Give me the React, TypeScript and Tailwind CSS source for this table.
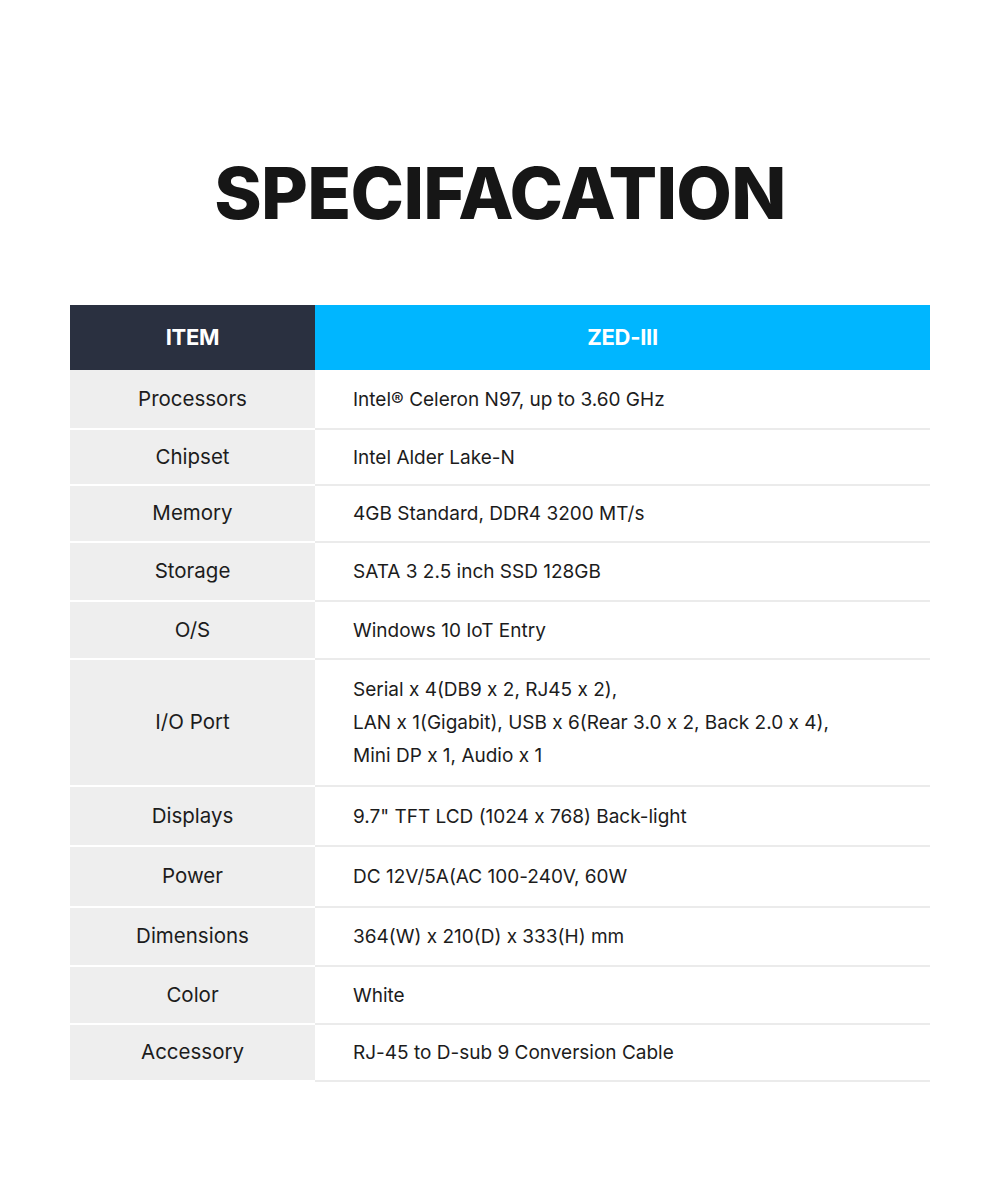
import React from "react";

const specs = [
  { item: "Processors", value: ["Intel® Celeron N97, up to 3.60 GHz"], h: "h-[58px]" },
  { item: "Chipset", value: ["Intel Alder Lake-N"], h: "h-[54px]" },
  { item: "Memory", value: ["4GB Standard, DDR4 3200 MT/s"], h: "h-[55px]" },
  { item: "Storage", value: ["SATA 3 2.5 inch SSD 128GB"], h: "h-[57px]" },
  { item: "O/S", value: ["Windows 10 IoT Entry"], h: "h-[56px]" },
  {
    item: "I/O Port",
    value: [
      "Serial x 4(DB9 x 2, RJ45 x 2),",
      "LAN x 1(Gigabit), USB x 6(Rear 3.0 x 2, Back 2.0 x 4),",
      "Mini DP x 1, Audio x 1",
    ],
    h: "h-[125px]",
  },
  { item: "Displays", value: ['9.7" TFT LCD (1024 x 768) Back-light'], h: "h-[58px]" },
  { item: "Power", value: ["DC 12V/5A(AC 100-240V, 60W"], h: "h-[59px]" },
  { item: "Dimensions", value: ["364(W) x 210(D) x 333(H) mm"], h: "h-[57px]" },
  { item: "Color", value: ["White"], h: "h-[56px]" },
  { item: "Accessory", value: ["RJ-45 to D-sub 9 Conversion Cable"], h: "h-[55px]" },
];

const App = () => {
  return (
    <div className="w-[1000px] h-[1200px] bg-white font-['Inter',sans-serif] [font-feature-settings:'calt'_0] text-[#1c1c1c]">
      <div className="pt-[148px] flex justify-center">
        <h1 className="text-[72px] leading-none font-extrabold tracking-[-0.7px] text-[#161616] h-[90px] flex items-center">
          SPECIFACATION
        </h1>
      </div>

      <div className="mx-[70px] mt-[67px]">
        <div className="flex h-[65px] text-white font-bold text-[22px] tracking-[-0.3px]">
          <div className="w-[245px] bg-[#2a3040] flex items-center justify-center">ITEM</div>
          <div className="flex-1 bg-[#00b6ff] flex items-center justify-center">ZED-III</div>
        </div>

        {specs.map((row, i) => (
          <div key={i} className="flex">
            <div className="w-[245px] bg-[#eeeeee] border-b-2 border-white">
              <div className={`${row.h} flex items-center justify-center text-[20.5px]`}>{row.item}</div>
            </div>
            <div className="flex-1 border-b-2 border-[#ebebeb]">
              <div className={`${row.h} flex flex-col justify-center pl-[38px] leading-[33px] text-[19px]`}>
                {row.value.map((line, j) => (
                  <div key={j}>{line}</div>
                ))}
              </div>
            </div>
          </div>
        ))}
      </div>
    </div>
  );
};

export default App;
